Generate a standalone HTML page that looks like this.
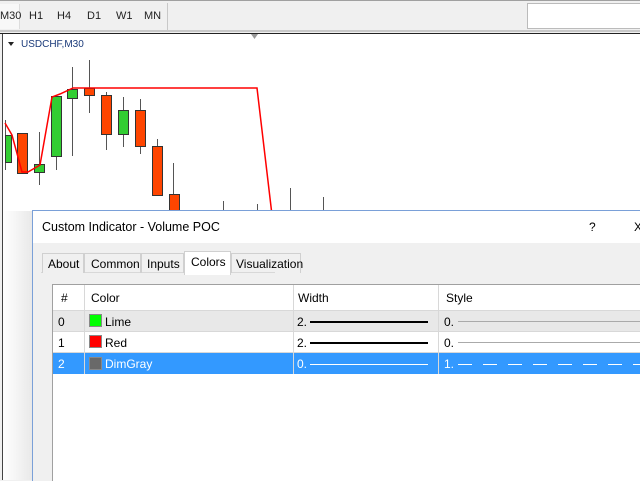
<!DOCTYPE html>
<html><head><style>
body{margin:0;width:640px;height:480px;overflow:hidden;background:#f0f0f0;font-family:"Liberation Sans",sans-serif;position:relative}
.a{position:absolute}
.tb{font-size:11px;color:#222;top:10px}
.t{font-size:12px;color:#000}
</style></head><body>
<div class="a" style="left:0;top:0;width:640px;height:1px;background:#a0a0a0"></div>
<div class="a" style="left:0;top:4px;width:19px;height:25px;background:#f8f8f8;border-right:1px solid #ddd"></div>
<div class="a tb" style="left:0">M30</div>
<div class="a tb" style="left:29px">H1</div>
<div class="a tb" style="left:57px">H4</div>
<div class="a tb" style="left:87px">D1</div>
<div class="a tb" style="left:116px">W1</div>
<div class="a tb" style="left:144px">MN</div>
<div class="a" style="left:167px;top:3px;width:1px;height:27px;background:#c8c8c8"></div>
<div class="a" style="left:527px;top:3px;width:113px;height:24px;background:#fff;border:1px solid #bbb"></div>
<div class="a" style="left:0;top:30px;width:640px;height:2px;background:#c8c8c8"></div>
<div class="a" style="left:0;top:33px;width:640px;height:1px;background:#222"></div>
<div class="a" style="left:2px;top:34px;width:638px;height:446px;background:#fff;border-left:1px solid #444"></div>
<div class="a" style="left:3px;top:211px;width:30px;height:269px;background:linear-gradient(90deg,#fff,#e8e8e8)"></div>
<svg class="a" style="left:0;top:0" width="640" height="480">
<polygon points="8,42 14,42 11,46" fill="#222"/>
<polygon points="251,34 258,34 254.5,39" fill="#999"/>
<text x="21" y="47" font-size="10" fill="#1a3a7a" font-family="Liberation Sans">USDCHF,M30</text>
<g stroke="#555" stroke-width="1">
<line x1="39.5" y1="132" x2="39.5" y2="185"/><line x1="56.5" y1="96" x2="56.5" y2="170"/>
<line x1="72.5" y1="67" x2="72.5" y2="156"/><line x1="89.5" y1="60" x2="89.5" y2="113"/>
<line x1="106.5" y1="92" x2="106.5" y2="150"/><line x1="123.5" y1="97" x2="123.5" y2="147"/>
<line x1="140.5" y1="99" x2="140.5" y2="154"/><line x1="157.5" y1="139" x2="157.5" y2="195"/>
<line x1="173.5" y1="163" x2="173.5" y2="211"/><line x1="223.5" y1="201" x2="223.5" y2="211"/>
<line x1="257.5" y1="204" x2="257.5" y2="211"/><line x1="290.5" y1="188" x2="290.5" y2="211"/>
<line x1="323.5" y1="197" x2="323.5" y2="211"/><line x1="5.5" y1="120" x2="5.5" y2="170"/>
</g>
<g stroke="#333" stroke-width="1">
<rect x="5.5" y="135.5" width="6" height="27" fill="#32cd32"/>
<rect x="17.5" y="133.5" width="10" height="40" fill="#ff4500"/>
<rect x="34.5" y="164.5" width="10" height="8" fill="#32cd32"/>
<rect x="51.5" y="96.5" width="10" height="60" fill="#32cd32"/>
<rect x="67.5" y="89.5" width="10" height="9" fill="#32cd32"/>
<rect x="84.5" y="88.5" width="10" height="7" fill="#ff4500"/>
<rect x="101.5" y="95.5" width="10" height="39" fill="#ff4500"/>
<rect x="118.5" y="110.5" width="10" height="24" fill="#32cd32"/>
<rect x="135.5" y="110.5" width="10" height="36" fill="#ff4500"/>
<rect x="152.5" y="146.5" width="10" height="49" fill="#ff4500"/>
<rect x="169.5" y="194.5" width="10" height="20" fill="#ff4500"/>
</g>
<polyline points="5,123 12,135 22,172 28,172 40,165 52,97 60,94 73,88 257,88 272,215" fill="none" stroke="#f00" stroke-width="1.5"/>
</svg>
<div class="a" style="left:32px;top:210px;width:608px;height:270px;background:#f0f0f0;border-left:1px solid #7aa0d8;border-top:1px solid #7aa0d8"></div>
<div class="a" style="left:33px;top:211px;width:607px;height:32px;background:#fff"></div>
<div class="a t" style="left:42px;top:220px;font-size:12.5px">Custom Indicator - Volume POC</div>
<div class="a t" style="left:589px;top:220px">?</div>
<div class="a t" style="left:634px;top:220px">X</div>
<div class="a" style="left:41px;top:272px;width:234px;height:1px;background:#d8d8d8"></div>
<div class="a" style="left:42px;top:253px;width:40px;height:19px;border:1px solid #d0d0d0;border-bottom:none;background:#f0f0f0"></div>
<div class="a t" style="left:48px;top:257px">About</div>
<div class="a" style="left:84px;top:253px;width:55px;height:19px;border:1px solid #d0d0d0;border-bottom:none"></div>
<div class="a t" style="left:91px;top:257px">Common</div>
<div class="a" style="left:141px;top:253px;width:41px;height:19px;border:1px solid #d0d0d0;border-bottom:none"></div>
<div class="a t" style="left:147px;top:257px">Inputs</div>
<div class="a" style="left:184px;top:251px;width:45px;height:23px;border:1px solid #d0d0d0;border-bottom:none;background:#fff"></div>
<div class="a t" style="left:191px;top:255px">Colors</div>
<div class="a" style="left:231px;top:253px;width:68px;height:19px;border:1px solid #d0d0d0;border-bottom:none"></div>
<div class="a t" style="left:236px;top:257px">Visualization</div>
<div class="a" style="left:52px;top:284px;width:588px;height:196px;background:#fff;border-left:1px solid #a0a0a0;border-top:1px solid #a0a0a0"></div>
<div class="a" style="left:53px;top:310px;width:587px;height:1px;background:#d8d8d8"></div>
<div class="a" style="left:53px;top:311px;width:587px;height:20px;background:#e8e8e8;border-bottom:1px solid #d8d8d8"></div>
<div class="a" style="left:53px;top:332px;width:587px;height:20px;background:#fff;border-bottom:1px solid #d8d8d8"></div>
<div class="a" style="left:53px;top:353px;width:587px;height:21px;background:#3399ff"></div>
<div class="a" style="left:84px;top:285px;width:1px;height:89px;background:#d8d8d8"></div>
<div class="a" style="left:293px;top:285px;width:1px;height:89px;background:#d8d8d8"></div>
<div class="a" style="left:438px;top:285px;width:1px;height:89px;background:#d8d8d8"></div>
<div class="a t" style="left:61px;top:291px">#</div>
<div class="a t" style="left:91px;top:291px">Color</div>
<div class="a t" style="left:298px;top:291px">Width</div>
<div class="a t" style="left:446px;top:291px">Style</div>
<div class="a t" style="left:58px;top:315px">0</div>
<div class="a t" style="left:58px;top:336px">1</div>
<div class="a t" style="left:58px;top:357px;color:#fff">2</div>
<div class="a" style="left:89px;top:314px;width:11px;height:11px;background:#0f0;border:1px solid #888"></div>
<div class="a" style="left:89px;top:335px;width:11px;height:11px;background:#f00;border:1px solid #888"></div>
<div class="a" style="left:89px;top:357px;width:11px;height:11px;background:#696969;border:1px solid #888"></div>
<div class="a t" style="left:105px;top:315px">Lime</div>
<div class="a t" style="left:105px;top:336px">Red</div>
<div class="a t" style="left:105px;top:357px;color:#fff">DimGray</div>
<div class="a t" style="left:297px;top:315px">2.</div>
<div class="a t" style="left:297px;top:336px">2.</div>
<div class="a t" style="left:297px;top:357px;color:#fff">0.</div>
<div class="a" style="left:310px;top:321px;width:118px;height:2px;background:#000"></div>
<div class="a" style="left:310px;top:342px;width:118px;height:2px;background:#000"></div>
<div class="a" style="left:310px;top:364px;width:118px;height:1px;background:#fff"></div>
<div class="a t" style="left:444px;top:315px">0.</div>
<div class="a t" style="left:444px;top:336px">0.</div>
<div class="a t" style="left:444px;top:357px;color:#fff">1.</div>
<div class="a" style="left:458px;top:321px;width:182px;height:1px;background:#aaa"></div>
<div class="a" style="left:458px;top:342px;width:182px;height:1px;background:#aaa"></div>
<div class="a" style="left:458px;top:364px;width:182px;height:1px;background:repeating-linear-gradient(90deg,#fff 0 14px,transparent 14px 25px)"></div>
</body></html>
